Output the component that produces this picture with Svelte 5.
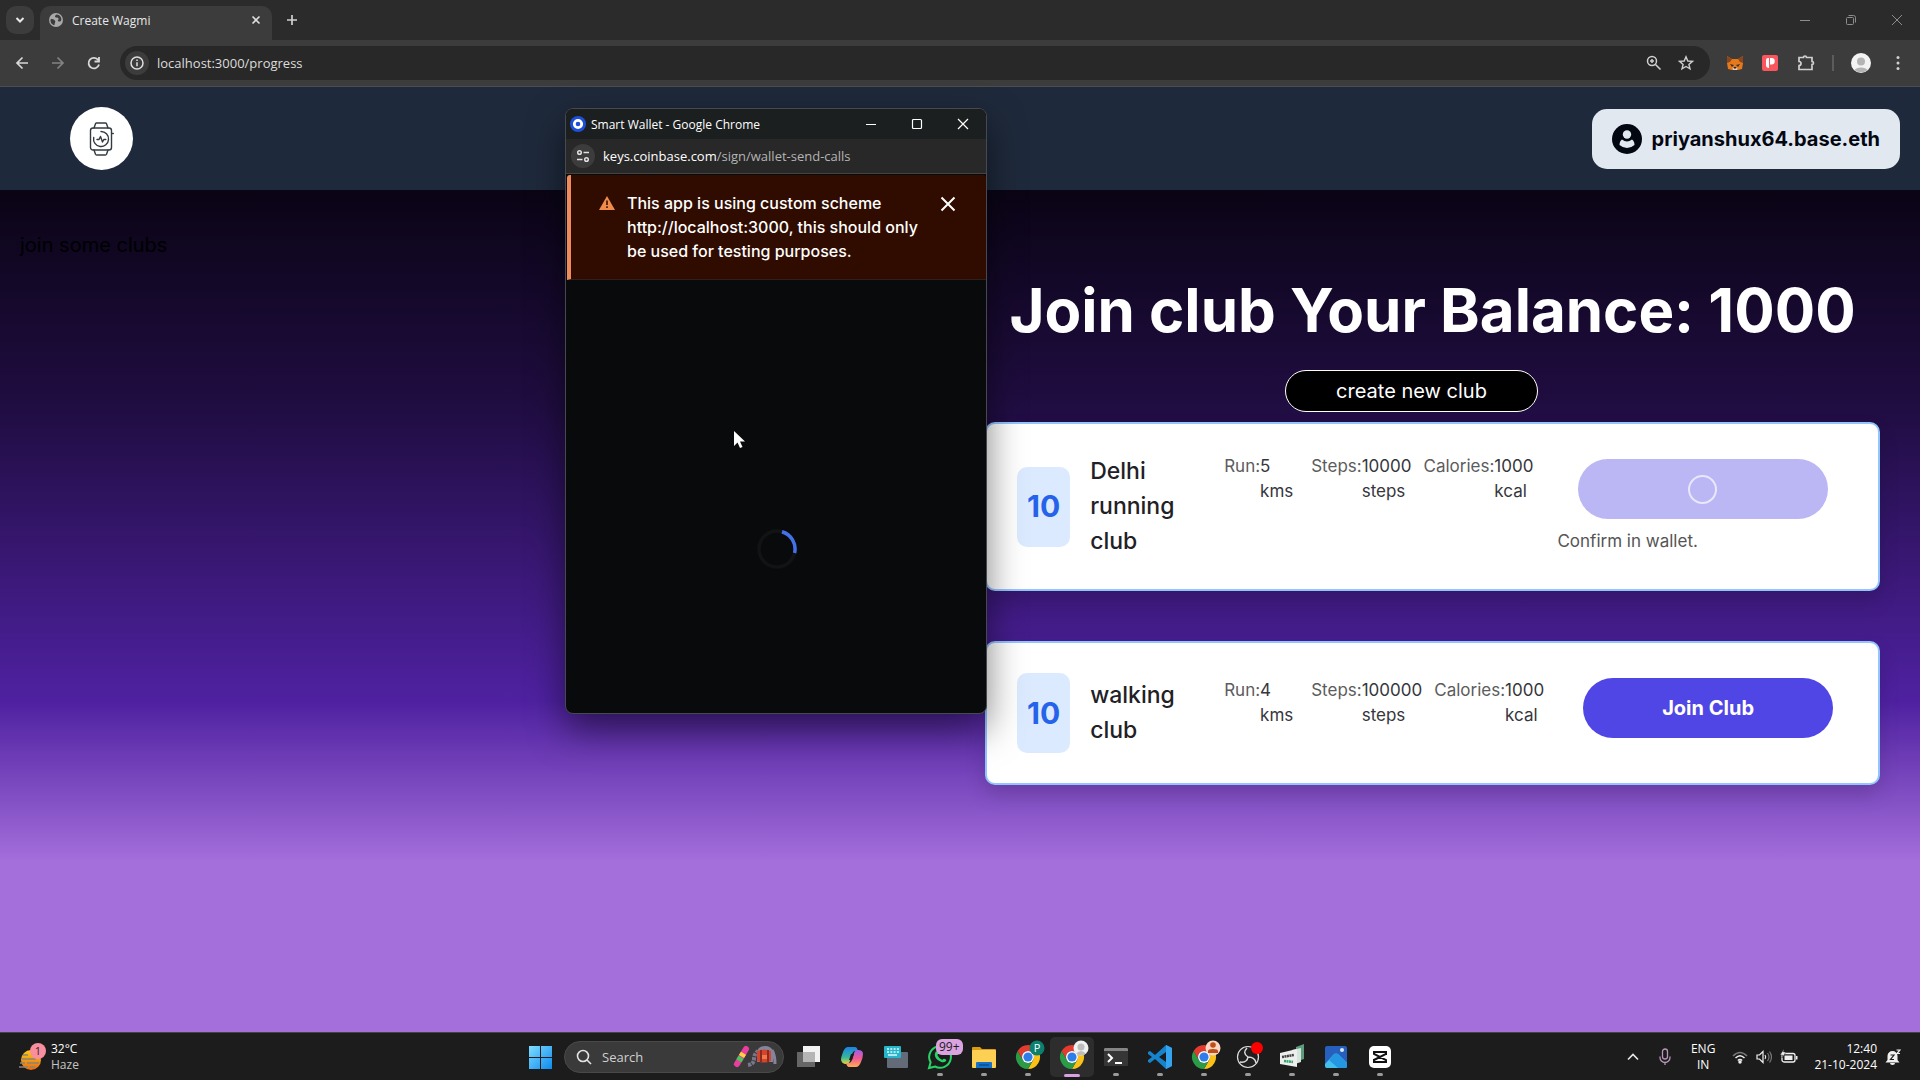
<script lang="ts">
  interface Club {
    fee: number;
    name: string;
    run: number;
    steps: number;
    calories: number;
    pending: boolean;
  }

  let url = $state('localhost:3000/progress');
  let search = $state('');
  let showWarning = $state(true);
  let balance = $state(1000);

  let clubs: Club[] = $state([
    { fee: 10, name: 'Delhi running club', run: 5, steps: 10000, calories: 1000, pending: true },
    { fee: 10, name: 'walking club', run: 4, steps: 100000, calories: 1000, pending: false }
  ]);

  const apps = [
    { id: 'whatsapp', label: 'WhatsApp' },
    { id: 'explorer', label: 'File Explorer' },
    { id: 'chrome-p', label: 'Chrome, profile P' },
    { id: 'chrome-guest', label: 'Chrome', active: true },
    { id: 'terminal', label: 'Terminal' },
    { id: 'code', label: 'Visual Studio Code' },
    { id: 'chrome-user', label: 'Chrome, work profile' },
    { id: 'obs', label: 'OBS Studio' },
    { id: 'spacedesk', label: 'spacedesk' },
    { id: 'photos', label: 'Photos' },
    { id: 'capcut', label: 'CapCut' }
  ];

  function join(club: Club) {
    club.pending = true;
  }
</script>

{#snippet chromeLogo()}
  <path d="M1.600 6A12 12 0 0 1 22.400 6L12 6A6 6 0 0 0 6.800 15Z" fill="#e33b2e" />
  <path d="M22.400 6A12 12 0 0 1 12 24L17.200 15A6 6 0 0 0 12 6Z" fill="#fbc116" />
  <path d="M12 24A12 12 0 0 1 1.600 6L6.800 15A6 6 0 0 0 17.200 15Z" fill="#2a9c48" />
  <circle cx="12" cy="12" r="6" fill="#fff" />
  <circle cx="12" cy="12" r="4.600" fill="#2f7de9" />
{/snippet}

<div class="screen">
  <!-- Browser chrome -->
  <div class="tab-strip">
    <button class="tab-search" aria-label="Search tabs">
      <svg width="12" height="12" viewBox="0 0 12 12" fill="none" stroke="#e8e8e8" stroke-width="2"><path d="M2.500 4l3.500 3.500L9.500 4" /></svg>
    </button>
    <div class="tab">
      <svg width="14" height="14" viewBox="0 0 14 14">
        <circle cx="7" cy="7" r="7" fill="#a8a8a8" />
        <path d="M1.500 6.500c2-1 3.500 0 4.500 1.200s-.5 2-.5 4.300C3 12 1.200 9.500 1.500 6.500zM7.500 1.500c-1.500 1-2 2-1 2.800s2.500 0 3 1.200S8 7.500 9.300 8.300s2.500 0 3-1.300C12.700 4 10.500 1.700 7.500 1.500z" fill="#3c3c3c" />
      </svg>
      <span class="tab-title">Create Wagmi</span>
      <button class="plain" aria-label="Close tab">
        <svg width="10" height="10" viewBox="0 0 10 10" stroke="#dedede" stroke-width="1.600"><path d="M1.500 1.500l7 7M8.500 1.500l-7 7" /></svg>
      </button>
    </div>
    <button class="plain new-tab" aria-label="New tab">
      <svg width="12" height="12" viewBox="0 0 12 12" stroke="#d0d0d0" stroke-width="1.700"><path d="M6 1v10M1 6h10" /></svg>
    </button>
    <div class="window-controls">
      <button class="plain" aria-label="Minimize"><svg width="12" height="12" viewBox="0 0 12 12" stroke="#8d8d8d"><path d="M1 6.500h10" /></svg></button>
      <button class="plain" aria-label="Restore">
        <svg width="12" height="12" viewBox="0 0 12 12" fill="none" stroke="#8d8d8d"><rect x="1.500" y="3.500" width="7" height="7" rx="1" /><path d="M3.500 1.500h5a2 2 0 0 1 2 2v5" /></svg>
      </button>
      <button class="plain" aria-label="Close"><svg width="12" height="12" viewBox="0 0 12 12" stroke="#8d8d8d"><path d="M1 1l10 10M11 1L1 11" /></svg></button>
    </div>
  </div>

  <div class="toolbar">
    <button class="plain" aria-label="Back">
      <svg width="14" height="14" viewBox="0 0 14 14" fill="none" stroke="#d8d8d8" stroke-width="1.700"><path d="M13 7H2M7.500 1.500L2 7l5.500 5.500" /></svg>
    </button>
    <button class="plain" aria-label="Forward">
      <svg width="14" height="14" viewBox="0 0 14 14" fill="none" stroke="#828282" stroke-width="1.700"><path d="M1 7h11M6.500 1.500L12 7l-5.500 5.500" /></svg>
    </button>
    <button class="plain" aria-label="Reload">
      <svg width="14" height="14" viewBox="0 0 14 14" fill="none" stroke="#d8d8d8" stroke-width="1.800"><path d="M12 8.500a5.300 5.300 0 1 1-.8-4.500M12 1v4.500H7.500" /></svg>
    </button>
    <label class="omnibox">
      <span class="site-info">
        <svg width="14" height="14" viewBox="0 0 14 14" fill="none" stroke="#dedede" stroke-width="1.500"><circle cx="7" cy="7" r="6" /><path d="M7 6.200v4M7 3.600v1.500" /></svg>
      </span>
      <input type="text" aria-label="Address" bind:value={url} />
      <svg width="16" height="16" viewBox="0 0 16 16" fill="none" stroke="#d0d0d0" stroke-width="1.500"><circle cx="6" cy="6" r="4.500" /><path d="M9.500 9.500l5 5M6 4v4M4 6h4" /></svg>
      <svg width="16" height="16" viewBox="0 0 16 16" fill="none" stroke="#d0d0d0" stroke-width="1.400"><path d="M8 1.800l1.800 4.200 4.600.4-3.500 3 1.100 4.500L8 11.500l-4 2.400 1.100-4.500-3.500-3L6.200 6z" /></svg>
    </label>
    <div class="extensions">
      <svg width="16" height="16" viewBox="0 0 16 16">
        <path d="M0 1l5 3h6l5-3v7l-1 6-4 1H5l-4-1-1-6z" fill="#e8791b" />
        <path d="M0 1l5 3-2 3-3 1zM16 1l-5 3 2 3 3 1z" fill="#8a461c" />
        <path d="M3 9l4 1-2 2zM13 9l-4 1 2 2z" fill="#38312b" />
        <path d="M5.500 12.500h5L10 15H6z" fill="#d9cfc7" />
        <path d="M6.500 12h3l-.5 1.500H7z" fill="#222" />
      </svg>
      <svg width="16" height="16" viewBox="0 0 16 16">
        <rect width="16" height="16" rx="2" fill="#f9565d" />
        <path d="M4 5a2 2 0 0 1 2-2h1v10a3 3 0 0 1-3-3zM8 3h1.500a3 3 0 0 1 0 6.500H8z" fill="#fff" />
      </svg>
      <svg width="18" height="18" viewBox="0 0 18 18" fill="none" stroke="#d0d0d0" stroke-width="1.700"><path d="M2 3.500h4.500a1.500 1.500 0 0 1 3 0H15v4a1.500 1.500 0 0 1 0 3v5H2v-4a2 2 0 0 0 0-4z" /></svg>
      <span class="divider"></span>
      <svg width="20" height="20" viewBox="0 0 20 20">
        <circle cx="10" cy="10" r="10" fill="#f3f3f3" />
        <circle cx="10" cy="8.500" r="4" fill="#b4b4b4" />
        <path d="M3.500 17a7 4 0 0 1 13 0 10 10 0 0 1-13 0z" fill="#b4b4b4" />
      </svg>
      <svg width="16" height="16" viewBox="0 0 16 16" fill="#d0d0d0"><circle cx="8" cy="2.500" r="1.500" /><circle cx="8" cy="8" r="1.500" /><circle cx="8" cy="13.500" r="1.500" /></svg>
    </div>
  </div>

  <!-- Web page -->
  <div class="page">
    <header>
      <a class="logo" href="/" aria-label="Home">
        <svg width="26" height="36" viewBox="0 0 26 36" fill="none" stroke="#343b40" stroke-width="1.400" stroke-linejoin="round" stroke-linecap="round">
          <rect x="1.500" y="7" width="21" height="22" rx="2.500" />
          <path d="M5 7l1.500-4.300Q6.800 2 7.600 2h8.800q.8 0 1.100.7L19 7M5 29l1.500 4.300q.3.700 1.100.700h8.800q.8 0 1.100-.7L19 29M23.500 12.500h.8" />
          <path d="M12 10.500a7.500 7.500 0 1 1-7.300 6" />
          <path d="M8 18.500h2l1.500-3 2 5.500 1.300-2.500h2" />
        </svg>
      </a>
      <button class="account">
        <svg width="30" height="30" viewBox="0 0 30 30">
          <circle cx="15" cy="15" r="15" fill="#030712" />
          <circle cx="15" cy="10.500" r="4.200" fill="#e2e8f0" />
          <path d="M10 15.500q5 4 10 0 2.500 1.500 2.500 5.500-3.500 3-7.500 3t-7.500-3q0-4 2.500-5.500z" fill="#e2e8f0" />
        </svg>
        priyanshux64.base.eth
      </button>
    </header>

    <main>
      <p class="hint">join some clubs</p>
      <section class="clubs">
        <h1>Join club Your Balance: {balance}</h1>
        <button class="create">create new club</button>
        <div class="club-list">
          {#each clubs as club}
            <article class="club">
              <span class="fee">{club.fee}</span>
              <div class="club-info">
                <h2>{club.name}</h2>
                <dl>
                  <div class="stat run"><dt>Run:</dt><dd>{club.run} kms</dd></div>
                  <div class="stat"><dt>Steps:</dt><dd>{club.steps} steps</dd></div>
                  <div class="stat"><dt>Calories:</dt><dd>{club.calories} kcal</dd></div>
                </dl>
              </div>
              <div class="action">
                <button class="join" disabled={club.pending} aria-label="Join Club" onclick={() => join(club)}>
                  {#if club.pending}
                    <span class="ring"></span>
                  {:else}
                    Join Club
                  {/if}
                </button>
                <div class="status">{club.pending ? 'Confirm in wallet.' : ''}</div>
              </div>
            </article>
          {/each}
        </div>
      </section>
    </main>
  </div>

  <!-- Taskbar -->
  <footer class="taskbar">
    <div class="weather">
      <svg width="28" height="28" viewBox="0 0 28 28">
        <defs>
          <linearGradient id="sun" x1="0" y1="0" x2="0" y2="1"><stop offset="0" stop-color="#fbcb12" /><stop offset="1" stop-color="#ea6a12" /></linearGradient>
        </defs>
        <circle cx="12" cy="17" r="10" fill="url(#sun)" />
        <path d="M4 12h5M3 16h14M1 20h5M8 20h12M0 24h9M11 24h5" stroke="#8b8378" stroke-width="1.500" />
        <circle cx="19" cy="8" r="8" fill="#f78f9f" />
        <text x="19" y="12" text-anchor="middle" class="badge-text" fill="#3d1820">1</text>
      </svg>
      <div class="weather-text"><span>32°C</span><span class="dim">Haze</span></div>
    </div>

    <div class="apps">
      <button class="app" aria-label="Start">
        <svg width="24" height="24" viewBox="0 0 24 24">
          <defs>
            <linearGradient id="win" x1="0" y1="0" x2="1" y2="1"><stop offset="0" stop-color="#7fdcff" /><stop offset="1" stop-color="#0d8bee" /></linearGradient>
          </defs>
          <path d="M1 1h11v11H1zM13 1h11v11H13zM1 13h11v11H1zM13 13h11v11H13z" fill="url(#win)" />
        </svg>
      </button>
      <label class="search">
        <svg width="16" height="16" viewBox="0 0 16 16" fill="none" stroke="#e3e3e3" stroke-width="1.600"><circle cx="7" cy="7" r="5.500" /><path d="M11 11l4 4" /></svg>
        <input type="text" aria-label="Search" placeholder="Search" bind:value={search} />
        <svg width="44" height="24" viewBox="0 0 44 24">
          <path d="M4 19L13 4" stroke="#e83e9d" stroke-width="6" stroke-linecap="round" />
          <path d="M6 15.700L8 12.300" stroke="#3ecb5c" stroke-width="6" />
          <path d="M8.500 11.500l2-3.300" stroke="#ffd33d" stroke-width="6" />
          <path d="M15 20q6-1 6-6t4-8" stroke="#77768b" stroke-width="4" stroke-dasharray="3 1" fill="none" />
          <path d="M24 6q2-5 8-5t8 5v11H24z" fill="#85849b" />
          <path d="M39 5q3 5 3 14" stroke="#85849b" stroke-width="3" fill="none" />
          <path d="M24 6q7-3 14 0v10q-7 3-14 0z" fill="#d4452e" />
          <path d="M28 5v12M35 5v12" stroke="#8b2923" stroke-width="2" />
          <path d="M29 10h5v4h-5z" fill="#ef7a43" />
        </svg>
      </label>
      <button class="app" aria-label="Task view">
        <svg width="24" height="24" viewBox="0 0 24 24"><rect x="1" y="7" width="18" height="15" fill="#666" /><rect x="7" y="1" width="17" height="16" fill="#f2f2f2" /><path d="M7 7h12v10H7z" fill="#b5b5b5" /></svg>
      </button>
      <button class="app" aria-label="Copilot">
        <svg width="24" height="24" viewBox="0 0 24 24">
          <defs>
            <linearGradient id="cop1" x1="0" y1="0" x2="0" y2="1"><stop offset="0" stop-color="#1c83e8" /><stop offset=".6" stop-color="#35b79b" /><stop offset="1" stop-color="#e6d738" /></linearGradient>
            <linearGradient id="cop2" x1="0" y1="0" x2="0" y2="1"><stop offset="0" stop-color="#a05de8" /><stop offset=".5" stop-color="#ef5a92" /><stop offset="1" stop-color="#ffad56" /></linearGradient>
          </defs>
          <path d="M8 2h7q2 0 3 4h-3q-2 0-3 3l-2 7q-1 3-4 3-4 0-5-4 0-3 2-8 2-5 5-5z" fill="url(#cop1)" />
          <path d="M16 22H9q-2 0-3-4h3q2 0 3-3l2-7q1-3 4-3 5 0 5 4 0 3-2 8-2 5-5 5z" fill="url(#cop2)" />
          <path d="M11 9h3l-2 6H9z" fill="#1c1c1c" />
        </svg>
      </button>
      <button class="app" aria-label="Touch keyboard">
        <svg width="24" height="24" viewBox="0 0 24 24"><rect x="3" y="7" width="21" height="16" rx="1" fill="#646b78" /><rect y="1" width="17" height="12" rx="1" fill="#26b5cb" /><path d="M3 4h12M3 7h12" stroke="#dffaff" stroke-width="1.500" stroke-dasharray="2 1.300" /><path d="M4 10h9" stroke="#dffaff" stroke-width="1.500" /></svg>
      </button>

      {#each apps as app}
        <button class="app" class:active={app.active} aria-label={app.label}>
          <svg width="36" height="36" viewBox="-6 -6 36 36">
            {#if app.id === 'whatsapp'}
              <path d="M12 1.200a10.800 10.800 0 1 1-5 20.300L1 23l1.600-5.700A10.800 10.800 0 0 1 12 1.200z" fill="none" stroke="#25d366" stroke-width="2" />
              <path d="M7.500 7q1.500-2 2.500 1 .5 1-.7 2 1.500 3.500 5 5 1-1.500 2-1.200 3 1 1.500 2.400-2 2-5.500.2-6-3-5.500-7.500z" fill="#25d366" />
            {:else if app.id === 'explorer'}
              <path d="M0 3q0-1 1-1h7l2 2h13q1 0 1 1v7H0z" fill="#dc9b14" />
              <rect y="5" width="24" height="18" rx="1" fill="#fcd053" />
              <path d="M4 18q0-1 1-1h14q1 0 1 1v5H4z" fill="#1470c8" />
              <path d="M7 20h10" stroke="#0b4d8f" stroke-width="1.500" />
            {:else if app.id.startsWith('chrome')}
              {@render chromeLogo()}
              {#if app.id === 'chrome-p'}
                <circle cx="21" cy="3" r="7.500" fill="#0b7f70" />
                <text x="21" y="7" text-anchor="middle" class="badge-text" fill="#fff">P</text>
              {:else if app.id === 'chrome-guest'}
                <circle cx="21" cy="3" r="7.500" fill="#f1f1f1" />
                <circle cx="21" cy="2" r="3.500" fill="#bdbdbd" />
                <path d="M16 8.500q5-5 10 0-5 4-10 0z" fill="#bdbdbd" />
              {:else}
                <circle cx="21" cy="3" r="7.500" fill="#ffd6c2" />
                <circle cx="21" cy="0" r="2.800" fill="#bd4d1c" />
                <path d="M16 8V6q0-2 5-2t5 2v2z" fill="#bd4d1c" />
              {/if}
            {:else if app.id === 'terminal'}
              <rect y="3" width="24" height="18" rx="1" fill="#363636" />
              <path d="M1 3h22l1 1v2H0V4z" fill="#858585" />
              <path d="M4 9l4 4-4 4M11 18h7" fill="none" stroke="#fff" stroke-width="2" />
            {:else if app.id === 'code'}
              <path d="M18 0l6 3v18l-6 3L7 14l-5 4-2-1V15l4-3-4-3V7l2-1 5 4zM18 7l-7 5 7 5z" fill="#1683cd" fill-rule="evenodd" />
              <path d="M18 0l6 3v18l-6 3z" fill="#35a4ee" />
            {:else if app.id === 'obs'}
              <circle cx="12" cy="12" r="10.500" fill="#202020" stroke="#ddd" stroke-width="1.200" />
              <path d="M11 3q-5 5 1 9 7 0 8 6M12 12q-1 6-8 5" fill="none" stroke="#ddd" stroke-width="1.500" />
              <circle cx="21" cy="3" r="6" fill="#f00" />
            {:else if app.id === 'spacedesk'}
              <path d="M16 2l8-3v15l-3 1V5l-5 1z" fill="#5e9d7b" />
              <path d="M12 5l9-2v14l-9 3z" fill="#d5e5dd" />
              <path d="M0 8l17-4v18L0 19z" fill="#eee" />
              <path d="M2 12l12-2" stroke="#444" stroke-width="2.500" stroke-dasharray="2 .5" />
              <path d="M4 16l9 1" stroke="#31a56c" stroke-width="2.500" stroke-dasharray="2 .5" />
            {:else if app.id === 'photos'}
              <rect x="1" y="1" width="22" height="22" rx="2" fill="#265fbc" />
              <path d="M1 19L10 9q2-1 4 0l9 9v3q0 2-2 2H3q-2 0-2-2z" fill="#43bfee" />
              <path d="M14 9l9 9v3q0 2-2 2h-7L5 15l5-6q2-1 4 0z" fill="#2596e1" />
              <circle cx="18" cy="5" r="2" fill="#d8ebff" />
            {:else}
              <rect x="1" y="1" width="22" height="22" rx="5" fill="#fff" />
              <path d="M18 10V7H6v2l12 6v2H6v-3M18 7v2L6 15" fill="none" stroke="#111" stroke-width="2" />
            {/if}
          </svg>
          {#if app.id === 'whatsapp'}<span class="count">99+</span>{/if}
        </button>
      {/each}
    </div>

    <div class="tray">
      <svg width="12" height="16" viewBox="0 0 12 16" fill="none" stroke="#e8e8e8" stroke-width="1.600"><path d="M1 10.500l5-5 5 5" /></svg>
      <svg class="mic" width="12" height="18" viewBox="0 0 12 18" fill="none" stroke="#b796b9" stroke-width="1.300"><rect x="3.500" y="1" width="5" height="10" rx="2.500" /><path d="M1 8.500v1a4.500 4.500 0 0 0 10 0v-1M6 14v3" /></svg>
      <div class="lang"><span>ENG</span><span>IN</span></div>
      <svg width="16" height="16" viewBox="0 0 16 16" fill="none" stroke="#f0f0f0" stroke-width="1.500"><path d="M1 7q7-7 14 0" stroke="#777" /><path d="M3.500 9q4.500-4.500 9 0M5.800 11.500q2.200-2 4.400 0" /><circle cx="8" cy="13" r="1" fill="#f0f0f0" /></svg>
      <svg width="16" height="16" viewBox="0 0 16 16" fill="none" stroke="#f0f0f0" stroke-width="1.200"><path d="M1 6h2.500L7 2.500v11L3.500 10H1zM9 6q1.500 2 0 4" /><path d="M11.500 4q3 4 0 8M13.500 2.500q4 5.500 0 11" stroke="#777" /></svg>
      <svg width="18" height="16" viewBox="0 0 18 16"><rect x="2" y="4.500" width="13" height="8.500" rx="2" fill="none" stroke="#f0f0f0" stroke-width="1.300" /><path d="M4.500 6.500h8V11h-8zM16 7h1.500v3.500H16z" fill="#f0f0f0" /><path d="M4 0L0 6h2.500L2 9l4-6H3.500z" fill="#f0f0f0" stroke="#1c1c1c" stroke-width=".5" /></svg>
      <div class="clock"><span>12:40</span><span>21-10-2024</span></div>
      <svg width="16" height="18" viewBox="0 0 16 18"><path d="M2.500 8a5 5 0 0 1 10 0v4l2 2.500H.500l2-2.500z" fill="#f0f0f0" /><path d="M5 15h5a2.500 2 0 0 1-5 0z" fill="#f0f0f0" /><path d="M5.500 7H9l-3.500 4.500H9" stroke="#1c1c1c" fill="none" stroke-width="1.200" /><path d="M11.500 2H15l-3 3.500h3" stroke="#f0f0f0" fill="none" stroke-width="1.200" /></svg>
    </div>
  </footer>

  <!-- Wallet popup -->
  <div class="popup">
    <div class="popup-title">
      <svg width="16" height="16" viewBox="0 0 16 16"><circle cx="8" cy="8" r="8" fill="#1d4fd7" /><circle cx="8" cy="8" r="3.700" fill="none" stroke="#fff" stroke-width="2.800" /></svg>
      <span>Smart Wallet - Google Chrome</span>
      <div class="popup-controls">
        <button class="plain" aria-label="Minimize wallet"><svg width="12" height="12" viewBox="0 0 12 12" stroke="#fff"><path d="M1 6.500h10" /></svg></button>
        <button class="plain" aria-label="Maximize wallet"><svg width="12" height="12" viewBox="0 0 12 12" fill="none" stroke="#fff" stroke-width="1.200"><rect x="1.500" y="1.500" width="9" height="9" rx="1" /></svg></button>
        <button class="plain" aria-label="Close wallet"><svg width="12" height="12" viewBox="0 0 12 12" stroke="#fff" stroke-width="1.200"><path d="M1 1l10 10M11 1L1 11" /></svg></button>
      </div>
    </div>
    <div class="popup-address">
      <span class="site-info">
        <svg width="14" height="14" viewBox="0 0 14 14" fill="none" stroke="#e0e0e0" stroke-width="1.500"><circle cx="3.500" cy="3.500" r="1.800" /><path d="M7.500 3.500H13M1 10.500h5.500" /><circle cx="10.500" cy="10.500" r="1.800" /></svg>
      </span>
      <span>keys.coinbase.com<span class="path">/sign/wallet-send-calls</span></span>
    </div>
    <div class="popup-page">
      {#if showWarning}
        <div class="warning">
          <svg width="16" height="14" viewBox="0 0 16 14"><path d="M8 0l8 14H0z" fill="#f08c4b" /><path d="M8 4.500v4.500M8 10.300v1.700" stroke="#3a1200" stroke-width="1.600" /></svg>
          <p>This app is using custom scheme http://localhost:3000, this should only be used for testing purposes.</p>
          <button class="plain" aria-label="Dismiss" onclick={() => (showWarning = false)}>
            <svg width="16" height="16" viewBox="0 0 16 16" stroke="#fff" stroke-width="2"><path d="M1.500 1.500l13 13M14.500 1.500l-13 13" /></svg>
          </button>
        </div>
      {/if}
      <div class="loading">
        <svg width="40" height="40" viewBox="0 0 40 40" fill="none" stroke-width="3.500">
          <circle cx="20" cy="20" r="18" stroke="#121315" />
          <path d="M25 2.700A18 18 0 0 1 37.600 24" stroke="#4470e8" />
        </svg>
      </div>
    </div>
    <svg class="cursor" width="13" height="19" viewBox="0 0 13 19"><path d="M1 1v15l3.500-3.500L7 18l2.500-1-2.500-5.500h5z" fill="#fff" /></svg>
  </div>
</div>

<style>
  :global(body) {
    background: #1c1c1c;
  }
  .screen {
    position: relative;
    display: flex;
    flex-direction: column;
    min-height: 100vh;
    font-family: 'Open Sans', 'Noto Sans', sans-serif;
    font-size: 12px;
    color: #fff;
  }
  button {
    font-family: inherit;
    cursor: pointer;
  }
  .plain {
    display: flex;
    padding: 0;
    border: none;
    background: none;
  }
  svg {
    flex-shrink: 0;
  }
  input {
    flex: 1;
    min-width: 0;
    padding: 0;
    border: none;
    outline: none;
    background: none;
    font-family: inherit;
  }

  /* Browser chrome */
  .tab-strip {
    display: flex;
    align-items: center;
    height: 40px;
    padding: 0 10px 0 6px;
    background: #2b2b2b;
  }
  .tab-search {
    display: flex;
    align-items: center;
    justify-content: center;
    width: 28px;
    height: 28px;
    padding: 0;
    border: none;
    border-radius: 10px;
    background: #3c3c3c;
  }
  .tab {
    display: flex;
    align-items: center;
    gap: 9px;
    align-self: flex-end;
    box-sizing: border-box;
    width: 232px;
    height: 34px;
    margin-left: 6px;
    padding: 0 11px 6px 9px;
    border-radius: 10px 10px 0 0;
    background: #3c3c3c;
  }
  .tab-title {
    flex: 1;
    color: #e8e8e8;
  }
  .new-tab {
    margin-left: 14px;
  }
  .window-controls {
    display: flex;
    gap: 34px;
    margin-left: auto;
    padding-right: 7px;
  }
  .toolbar {
    display: flex;
    align-items: center;
    gap: 22px;
    box-sizing: border-box;
    height: 47px;
    padding: 0 14px 0 15px;
    border-bottom: 1px solid #4d4d4d;
    background: #3c3c3c;
  }
  .omnibox {
    flex: 1;
    display: flex;
    align-items: center;
    gap: 16px;
    box-sizing: border-box;
    height: 34px;
    margin-right: -5px;
    margin-left: -3px;
    padding: 0 16px 0 5px;
    border-radius: 17px;
    background: #282828;
  }
  .omnibox input {
    margin-left: -8px;
    font-size: 13px;
    color: #dcdcdc;
  }
  .site-info {
    display: flex;
    align-items: center;
    justify-content: center;
    width: 24px;
    height: 24px;
    border-radius: 50%;
    background: #3c3c3c;
  }
  .extensions {
    display: flex;
    align-items: center;
    gap: 19px;
  }
  .divider {
    width: 2px;
    height: 16px;
    margin: 0 -2px;
    background: #5c5c5c;
  }

  /* Page */
  .page {
    flex: 1;
    display: flex;
    flex-direction: column;
    background: linear-gradient(to bottom, #000, #200d42 34%, #4f21a1 65%, #a46edb 82%);
    font-family: Inter, sans-serif;
    font-size: 20px;
  }
  header {
    display: flex;
    align-items: center;
    justify-content: space-between;
    padding: 20px 20px 20px 70px;
    background: #1e293b;
  }
  .logo {
    display: flex;
    align-items: center;
    justify-content: center;
    width: 63px;
    height: 63px;
    border-radius: 50%;
    background: #fff;
  }
  .account {
    display: flex;
    align-items: center;
    gap: 10px;
    height: 60px;
    padding: 0 20px;
    border: none;
    border-radius: 15px;
    background: #e2e8f0;
    color: #030712;
    font-size: 20px;
    font-weight: 700;
  }
  main {
    display: flex;
    justify-content: space-between;
    padding: 40px 40px 40px 20px;
    color: #000;
  }
  .hint {
    margin: 0;
    line-height: 30px;
  }
  .clubs {
    display: flex;
    flex-direction: column;
    align-items: center;
    width: 895px;
    padding-top: 50px;
  }
  h1 {
    margin: 0 0 30px;
    color: #fff;
    font-size: 60px;
    line-height: 60px;
    font-weight: 700;
    white-space: nowrap;
  }
  .create {
    width: 253px;
    height: 42px;
    margin-right: 42px;
    border: 1px solid #fff;
    border-radius: 21px;
    background: #000;
    color: #fff;
    font-size: 20px;
  }
  .club-list {
    display: flex;
    flex-direction: column;
    gap: 50px;
    align-self: stretch;
    margin-top: 10px;
  }
  .club {
    display: flex;
    align-items: center;
    gap: 20px;
    padding: 30px;
    border: 2px solid #93c5fd;
    border-radius: 10px;
    background: #fff;
    box-shadow: 0 10px 20px rgba(0, 0, 0, 0.15);
    font-size: 17px;
    line-height: 25px;
  }
  .fee {
    display: flex;
    align-items: center;
    height: 80px;
    padding: 0 10px;
    border-radius: 10px;
    background: #dbeafe;
    color: #2563eb;
    font-size: 30px;
    font-weight: 700;
  }
  .club-info {
    display: flex;
    gap: 20px;
    padding-right: 4px;
  }
  h2 {
    width: 114px;
    margin: 0;
    color: #1f2126;
    font-size: 23px;
    line-height: 35px;
    font-weight: 500;
  }
  dl {
    display: flex;
    gap: 12px;
    margin: 0;
  }
  .stat {
    display: flex;
  }
  .run {
    min-width: 75px;
  }
  dt {
    color: #5c5c5c;
  }
  dd {
    width: min-content;
    margin: 0;
    color: #36363c;
  }
  .action {
    flex: 1;
    display: flex;
    flex-direction: column;
    gap: 10px;
  }
  .join {
    display: flex;
    align-items: center;
    justify-content: center;
    align-self: center;
    width: 250px;
    height: 60px;
    border: none;
    border-radius: 30px;
    background: #4f46e5;
    color: #fff;
    font-size: 20px;
    font-weight: 700;
  }
  .join:disabled {
    background: #bbb6f4;
    cursor: default;
  }
  .ring {
    width: 25px;
    height: 25px;
    border: 2px solid #e9e7fb;
    border-radius: 50%;
  }
  .status {
    color: #555;
  }

  /* Taskbar */
  .taskbar {
    display: grid;
    grid-template-columns: 1fr auto 1fr;
    align-items: center;
    box-sizing: border-box;
    height: 48px;
    border-top: 1px solid #444;
    background: #1c1c1c;
    line-height: 16px;
  }
  .weather {
    display: flex;
    align-items: center;
    gap: 4px;
    padding-left: 19px;
  }
  .weather-text,
  .lang,
  .clock {
    display: flex;
    flex-direction: column;
  }
  .dim {
    color: #c4c4c4;
  }
  .badge-text {
    font-size: 11px;
  }
  .apps {
    display: flex;
    align-items: center;
  }
  .app {
    position: relative;
    display: flex;
    align-items: center;
    justify-content: center;
    width: 44px;
    height: 47px;
    padding: 0;
    border: none;
    background: none;
  }
  .app:nth-of-type(n + 5)::after {
    content: '';
    position: absolute;
    bottom: 4px;
    left: 19px;
    width: 6px;
    height: 3px;
    border-radius: 2px;
    background: #9a9a9a;
  }
  .app.active {
    height: 40px;
    border-radius: 5px;
    background: #2d2d2d;
  }
  .app.active::after {
    bottom: 0;
    left: 14px;
    width: 16px;
    background: #d8a1df;
  }
  .count {
    position: absolute;
    top: 6px;
    left: 18px;
    padding: 0 3px;
    border-radius: 6px;
    background: #dba3e0;
    color: #1c1c1c;
    font-size: 12px;
    line-height: 16px;
  }
  .search {
    display: flex;
    align-items: center;
    gap: 10px;
    box-sizing: border-box;
    width: 220px;
    height: 32px;
    margin: 0 2px;
    padding: 0 6px 0 11px;
    border: 1px solid #494949;
    border-radius: 16px;
    background: #3a3a3a;
  }
  .search input {
    font-size: 13px;
    color: #fff;
  }
  .search input::placeholder {
    color: #d0d0d0;
    opacity: 1;
  }
  .tray {
    display: flex;
    align-items: center;
    justify-content: flex-end;
    gap: 8px;
    padding-right: 19px;
  }
  .mic {
    margin-left: 12px;
  }
  .lang {
    align-items: center;
    margin: 0 9px 0 12px;
  }
  .clock {
    align-items: flex-end;
    margin-left: 8px;
  }

  /* Wallet popup */
  .popup {
    position: absolute;
    top: 108px;
    left: 565px;
    display: flex;
    flex-direction: column;
    box-sizing: border-box;
    width: 422px;
    height: 606px;
    border: 1px solid #464a50;
    border-radius: 8px;
    overflow: hidden;
    background: #090a0c;
    box-shadow: 0 16px 36px rgba(0, 0, 0, 0.5);
  }
  .popup-title {
    display: flex;
    align-items: center;
    gap: 5px;
    height: 30px;
    padding: 0 17px 0 4px;
    background: #1c1f1f;
  }
  .popup-controls {
    display: flex;
    gap: 34px;
    margin-left: auto;
  }
  .popup-address {
    display: flex;
    align-items: center;
    gap: 8px;
    height: 34px;
    padding-left: 5px;
    border-bottom: 1px solid #444;
    background: #282828;
    font-size: 13px;
  }
  .path {
    color: #b4b4b4;
  }
  .popup-page {
    flex: 1;
    display: flex;
    flex-direction: column;
    padding: 1px 0 0 1px;
  }
  .warning {
    display: flex;
    align-items: flex-start;
    gap: 12px;
    padding: 16px 30px 16px 28px;
    border-left: 4px solid #f08c5b;
    border-bottom: 1px solid #2b2220;
    border-radius: 3px 3px 0 0;
    background: #300c00;
    font-family: Inter, sans-serif;
    font-size: 16px;
    line-height: 24px;
    font-weight: 500;
  }
  .warning svg {
    margin-top: 5px;
  }
  .warning p {
    flex: 1;
    margin: 0;
  }
  .loading {
    flex: 1;
    display: flex;
    align-items: center;
    justify-content: center;
    padding-top: 104px;
  }
  .cursor {
    position: absolute;
    top: 321px;
    left: 167px;
  }
</style>
